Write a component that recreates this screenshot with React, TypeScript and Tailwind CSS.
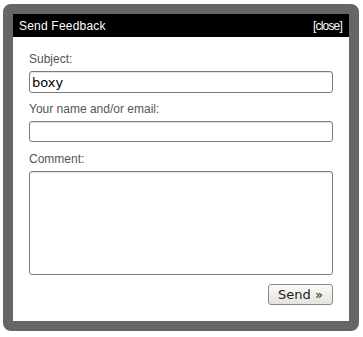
import React from "react";

const label = "block text-[12px] leading-[14px] text-[#555555]";
const field =
  "block w-full rounded-[3px] border border-[#807b75] bg-white px-[2px] text-[13px] text-black outline-none shadow-[inset_0_1px_1px_rgba(0,0,0,0.12)]";

export default function App() {
  return (
    <div className="bg-white w-[363px] h-[337px] pt-[4px] pl-[3px]">
      <div
        className="w-[356px] h-[327px] border-[10px] border-[#666666] rounded-[8px] bg-white flex flex-col"
        style={{ fontFamily: '"Liberation Sans", Arial, sans-serif' }}
      >
        <div className="h-[23px] bg-black flex items-center justify-between pl-[6px] pr-[7px] shrink-0">
          <span className="text-white text-[12px] tracking-[0.2px]">Send Feedback</span>
          <a className="text-white text-[12px] tracking-[-0.8px] cursor-pointer">[close]</a>
        </div>

        <form className="flex flex-col px-[16px] pt-[15px]" onSubmit={(e) => e.preventDefault()}>
          <label className={label}>Subject:</label>
          <input
            defaultValue="boxy"
            className={`${field} h-[22px] mt-[5px]`}
            style={{ fontFamily: '"DejaVu Sans", Verdana, sans-serif' }}
          />

          <label className={`${label} mt-[9px]`}>Your name and/or email:</label>
          <input
            className={`${field} h-[21px] mt-[5px]`}
            style={{ fontFamily: '"DejaVu Sans", Verdana, sans-serif' }}
          />

          <label className={`${label} mt-[10px]`}>Comment:</label>
          <textarea
            className={`${field} h-[104px] mt-[5px] resize-none`}
            style={{ fontFamily: '"DejaVu Sans", Verdana, sans-serif' }}
          />

          <div className="flex justify-end mt-[9px]">
            <button
              type="submit"
              className="w-[65px] h-[21px] rounded-[3px] border border-[#8c8882] bg-gradient-to-b from-[#fbfaf8] to-[#e6e3de] text-[13px] leading-none text-[#222]"
              style={{ fontFamily: '"DejaVu Sans", Verdana, sans-serif' }}
            >
              Send »
            </button>
          </div>
        </form>
      </div>
    </div>
  );
}
